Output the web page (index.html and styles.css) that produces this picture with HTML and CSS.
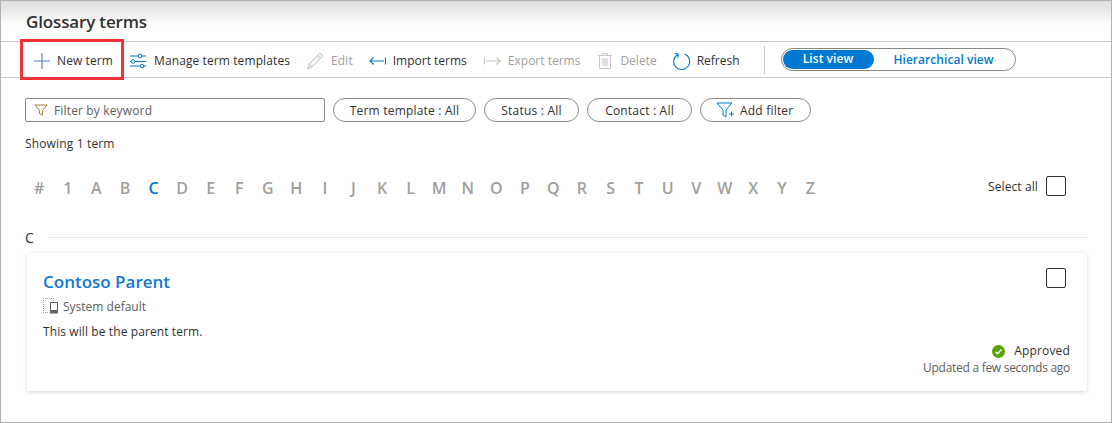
FILE: index.html
```html
<!DOCTYPE html>
<html lang="en">
<head>
	<meta charset="UTF-8">
	<title>Glossary terms</title>
	<link rel="stylesheet" href="styles.css">
</head>
<body>
	<div class="frame">
		<h1 class="title">Glossary terms</h1>

		<div class="toolbar">
			<button class="tool tool-new">
				<svg width="18" height="18" viewBox="0 0 18 18"><path d="M9 1v16M1 9h16" stroke="#5b7fc4" stroke-width="1.2" fill="none"/></svg>
				New term
			</button>
			<button class="tool">
				<svg width="18" height="18" viewBox="0 0 18 18" fill="none" stroke="#0078d4" stroke-width="1"><path d="M1 4h16M1 9.500h16M1 14h16"/><circle cx="11" cy="4" r="1.800" fill="#fff"/><circle cx="4" cy="9.500" r="1.800" fill="#fff"/><circle cx="13" cy="14" r="1.800" fill="#fff"/></svg>
				Manage term templates
			</button>
			<button class="tool off">
				<svg width="18" height="18" viewBox="0 0 18 18" fill="none" stroke="#c8c6c4" stroke-width="1.100"><path d="M2 16.500l1.200-4.500L12.800 2.400a1.700 1.700 0 0 1 2.800 2.800L6 14.800z"/><path d="M3.200 12l2.800 2.800M11.500 3.700l2.800 2.800"/></svg>
				Edit
			</button>
			<button class="tool tool-flat">
				<svg width="18" height="18" viewBox="0 0 18 18" fill="none" stroke="#0078d4" stroke-width="1.100"><path d="M1 9h14M4.500 5.500L1 9l3.500 3.500M16.500 5.500v7"/></svg>
				Import terms
			</button>
			<button class="tool tool-flat tool-export off">
				<svg width="18" height="18" viewBox="0 0 18 18" fill="none" stroke="#c8c6c4" stroke-width="1.100"><path d="M3 9h14M13.500 5.500L17 9l-3.500 3.500M1.500 5.500v7"/></svg>
				Export terms
			</button>
			<button class="tool tool-flat off">
				<svg width="18" height="18" viewBox="0 0 18 18" fill="none" stroke="#c8c6c4" stroke-width="1"><path d="M2 3.500h14M6.500 3.500V1.500h5v2M3.500 3.500v13h11v-13M7 6v8M9 6v8M11 6v8"/></svg>
				Delete
			</button>
			<button class="tool tool-flat">
				<svg width="18" height="18" viewBox="0 0 18 18" fill="none" stroke="#0078d4" stroke-width="1.100"><path d="M11.500 2A8 8 0 1 1 5 2.400"/><path d="M1.800 1.500L5.300 2.300 5 6"/></svg>
				Refresh
			</button>
			<span class="sep"></span>
			<div class="toggle">
				<span class="toggle-on">List view</span>
				<span class="toggle-off">Hierarchical view</span>
			</div>
		</div>

		<div class="filters">
			<div class="search">
				<svg width="14" height="14" viewBox="0 0 14 14" fill="none" stroke="#a67c2e" stroke-width="1"><path d="M1 2h12L8.500 7.500V12l-3-1.500v-3z"/></svg>
				Filter by keyword
			</div>
			<button class="pill pill-a">Term template : All</button>
			<button class="pill pill-b">Status : All</button>
			<button class="pill pill-c">Contact : All</button>
			<button class="pill pill-d">
				<svg width="18" height="18" viewBox="0 0 18 18" fill="none" stroke="#0078d4" stroke-width="1"><path d="M1 2h15l-6 7v7l-3-2v-5z"/><path d="M13 13h5M15.500 10.500v5"/></svg>
				Add filter
			</button>
		</div>

		<p class="count">Showing 1 term</p>

		<div class="alpha-row">
			<div class="alpha">
				<span>#</span><span>1</span><span>A</span><span>B</span><span class="cur">C</span><span>D</span><span>E</span><span>F</span><span>G</span><span>H</span><span>I</span><span>J</span><span>K</span><span>L</span><span>M</span><span>N</span><span>O</span><span>P</span><span>Q</span><span>R</span><span>S</span><span>T</span><span>U</span><span>V</span><span>W</span><span>X</span><span>Y</span><span>Z</span>
			</div>
			<div class="select-all">Select all <span class="check"></span></div>
		</div>

		<div class="group">
			<span>C</span>
			<div class="group-line"></div>
		</div>

		<div class="card">
			<div class="card-left">
				<a class="term-name">Contoso Parent</a>
				<div class="term-tpl">
					<svg width="16" height="16" viewBox="0 0 16 16" fill="none"><path d="M5 .500H.500v14H5M6 .500h4.500V3" stroke="#999" stroke-dasharray="1 1"/><path d="M7.500 4.500h7v8h-7z" stroke="#555"/><path d="M7 12.500h8v3H7z" fill="#666"/></svg>
					System default
				</div>
				<p class="term-desc">This will be the parent term.</p>
			</div>
			<div class="card-right">
				<span class="check"></span>
				<div class="card-status">
					<div class="approved">
						<svg width="13" height="13" viewBox="0 0 13 13"><circle cx="6.500" cy="6.500" r="6.500" fill="#57a300"/><path d="M3.500 6.800l2 2 4-4.200" stroke="#fff" stroke-width="1.400" fill="none"/></svg>
						Approved
					</div>
					<div class="updated">Updated a few seconds ago</div>
				</div>
			</div>
		</div>
	</div>
</body>
</html>
```

FILE: styles.css
```css
*{
	margin:0;
	padding:0;
	box-sizing:border-box;
}
body{
	width:1112px;
	height:423px;
	overflow:hidden;
	background:#fff;
	font-family:"Open Sans","Noto Sans",sans-serif;
	font-size:12px;
	color:#323130;
}
button{
	font:inherit;
	color:inherit;
	background:none;
	border:none;
}
.frame{
	height:423px;
	border:1px solid #b0b0b0;
	background:linear-gradient(#dcdcdc 0,#fff 24px);
}
.title{
	height:40px;
	padding:10px 0 0 25px;
	font-size:17px;
	line-height:22px;
	font-weight:600;
	letter-spacing:-.15px;
}
.toolbar{
	display:flex;
	align-items:center;
	height:37px;
	padding-left:31px;
	background:#fff;
	border-top:1px solid #c8c8c8;
	border-bottom:1px solid #c8c8c8;
}
.tool{
	display:flex;
	align-items:center;
	gap:7px;
	margin-right:16px;
	padding-top:2px;
	white-space:nowrap;
	letter-spacing:.1px;
}
.tool.off{
	color:#a19f9d;
}
.tool-flat{
	gap:6px;
	letter-spacing:0;
}
.tool-export{
	gap:7px;
}
.tool-new{
	outline:3px solid #f0313a;
	height:35px;
	gap:6px;
	margin:0 8px 0 -9px;
	padding:2px 8px 0 10px;
}
.sep{
	width:1px;
	height:28px;
	margin:0 16px 0 8px;
	background:#c8c8c8;
}
.toggle{
	display:flex;
	align-items:center;
	width:235px;
	height:23px;
	padding:0 1px;
	border:1px solid #8a8886;
	border-radius:12px;
	font-weight:600;
	letter-spacing:.05px;
}
.toggle-on{
	width:91px;
	height:19px;
	line-height:18px;
	text-align:center;
	color:#fff;
	background:#0078d4;
	border-radius:10px;
}
.toggle-off{
	flex:1;
	text-align:center;
	color:#0078d4;
}
.filters{
	display:flex;
	align-items:center;
	height:24px;
	margin:20px 0 0 24px;
}
.search{
	display:flex;
	align-items:center;
	gap:6px;
	width:300px;
	height:24px;
	padding-left:8px;
	border:1px solid #8a8886;
	border-radius:2px;
	color:#605e5c;
	letter-spacing:.15px;
}
.pill{
	height:24px;
	border:1px solid #8a8886;
	border-radius:12px;
	white-space:nowrap;
	letter-spacing:.2px;
}
.pill-a{
	width:143px;
	margin-left:8px;
}
.pill-b{
	width:95px;
	margin-left:8px;
}
.pill-c{
	width:105px;
	margin-left:8px;
}
.pill-d{
	display:flex;
	align-items:center;
	gap:6px;
	width:111px;
	margin-left:8px;
	padding-left:15px;
}
.count{
	margin:13px 0 0 24px;
	line-height:18px;
	letter-spacing:.15px;
}
.alpha-row{
	display:flex;
	align-items:center;
	justify-content:space-between;
	height:24px;
	margin:21px 45px 0 24px;
}
.alpha{
	display:grid;
	grid-template-columns:repeat(28,28.57px);
	margin-top:4px;
	font-size:16px;
	font-weight:600;
	color:#a19f9d;
	text-align:center;
}
.alpha .cur{
	color:#0078d4;
}
.select-all{
	display:flex;
	align-items:center;
	gap:8px;
	letter-spacing:.1px;
}
.check{
	display:block;
	width:20px;
	height:20px;
	border:1px solid #323130;
	border-radius:2px;
}
.group{
	display:flex;
	align-items:center;
	gap:14px;
	height:18px;
	margin:30px 23px 0 24px;
	font-size:14px;
}
.group-line{
	flex:1;
	height:1px;
	background:#e8e8e8;
}
.card{
	display:flex;
	justify-content:space-between;
	width:1060px;
	height:138px;
	margin:7px 0 0 26px;
	padding:17px 17px 15px 16px;
	border-radius:2px;
	box-shadow:0 1px 4px rgba(0,0,0,.16);
}
.term-name{
	display:block;
	font-size:17px;
	line-height:24px;
	font-weight:600;
	color:#0f78d4;
}
.term-tpl{
	display:flex;
	align-items:center;
	gap:4px;
	height:18px;
	margin-top:3px;
	color:#605e5c;
}
.term-desc{
	margin-top:8px;
	line-height:18px;
	letter-spacing:.1px;
}
.card-right{
	display:flex;
	flex-direction:column;
	align-items:flex-end;
	justify-content:space-between;
}
.card-right .check{
	margin:-2px 4px 0 0;
}
.card-status{
	text-align:right;
}
.approved{
	display:flex;
	align-items:center;
	justify-content:flex-end;
	gap:9px;
	line-height:18px;
	letter-spacing:.15px;
}
.updated{
	line-height:16px;
	letter-spacing:-.28px;
	color:#605e5c;
}
```
